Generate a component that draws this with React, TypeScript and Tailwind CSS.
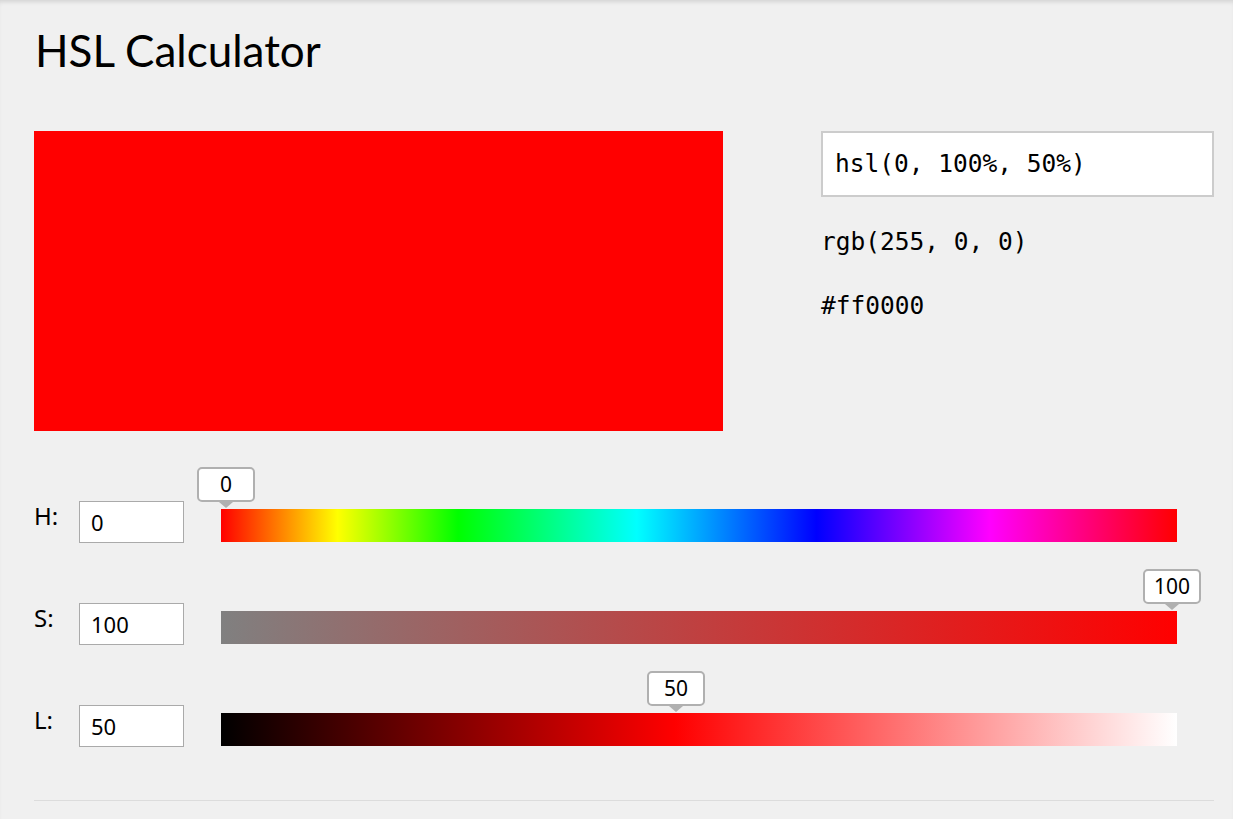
import { useState } from "react";

const sans = "font-['Noto_Sans',sans-serif]";
const mono = "font-['DejaVu_Sans_Mono',monospace]";

type Row = {
  label: string;
  value: number;
  thumb: number;
  bar: string;
};

const rows: Row[] = [
  {
    label: "H",
    value: 0,
    thumb: 5,
    bar: "bg-[linear-gradient(to_right,#ff0000_0%,#ffff00_12.2%,#00ff00_24.8%,#00ffff_43.5%,#0000ff_62.3%,#ff00ff_80.4%,#ff0000_100%)]",
  },
  {
    label: "S",
    value: 100,
    thumb: 951,
    bar: "bg-[linear-gradient(to_right,#808080,#ff0000)]",
  },
  {
    label: "L",
    value: 50,
    thumb: 455,
    bar: "bg-[linear-gradient(to_right,#000000_0%,#ff0000_47.5%,#ffffff_100%)]",
  },
];

function Tooltip({ value, left }: { value: number; left: number }) {
  return (
    <div
      className="absolute bottom-[calc(100%+1px)] -translate-x-1/2 flex flex-col items-center"
      style={{ left }}
    >
      <div className="w-[58px] h-[35px] bg-white border-2 border-[#b0b0b0] rounded-[5px] flex items-center justify-center text-[21px] text-black">
        {value}
      </div>
      <div className="w-0 h-0 border-x-[7px] border-x-transparent border-t-[6px] border-t-[#b0b0b0]" />
    </div>
  );
}

function SliderRow({ row }: { row: Row }) {
  const [val, setVal] = useState(String(row.value));
  return (
    <div className="flex items-start">
      <span className="w-[45px] text-[24px] leading-[30px] text-black">{row.label}:</span>
      <input
        value={val}
        onChange={(e) => setVal(e.target.value)}
        className={`${sans} w-[105px] h-[42px] bg-white border border-[#aaa] pl-[11px] text-[22px] text-black outline-none`}
      />
      <div className={`relative ml-[37px] mt-2 h-[33px] w-[956px] ${row.bar}`}>
        <Tooltip value={row.value} left={row.thumb} />
      </div>
    </div>
  );
}

export default function App() {
  return (
    <main
      className={`${sans} min-h-screen bg-[#f0f0f0] pl-[34px] pr-[19px] pt-[23px] shadow-[inset_0_4px_4px_-2px_rgba(0,0,0,0.12)]`}
    >
      <h1 className="font-['Lato',sans-serif] pl-px text-[44px] leading-[55px] text-black">HSL Calculator</h1>

      <section className="mt-[53px] flex">
        <div className="w-[689px] h-[300px] shrink-0 bg-[#ff0000]" />
        <div className="ml-[98px] w-[393px] shrink-0 flex flex-col">
          <div
            className={`${mono} h-[66px] bg-white border-2 border-[#ccc] flex items-center pl-[12px] text-[24.5px] leading-[28px] text-black`}
          >
            hsl(0, 100%, 50%)
          </div>
          <p className={`${mono} mt-[31px] text-[24.5px] leading-[28px] text-black`}>rgb(255, 0, 0)</p>
          <p className={`${mono} mt-[36px] text-[24.5px] leading-[28px] text-black`}>#ff0000</p>
        </div>
      </section>

      <section className="mt-[70px] flex flex-col gap-[60px]">
        {rows.map((row) => (
          <SliderRow key={row.label} row={row} />
        ))}
      </section>

      <hr className="mt-[53px] border-t border-[#dcdcdc]" />
    </main>
  );
}
